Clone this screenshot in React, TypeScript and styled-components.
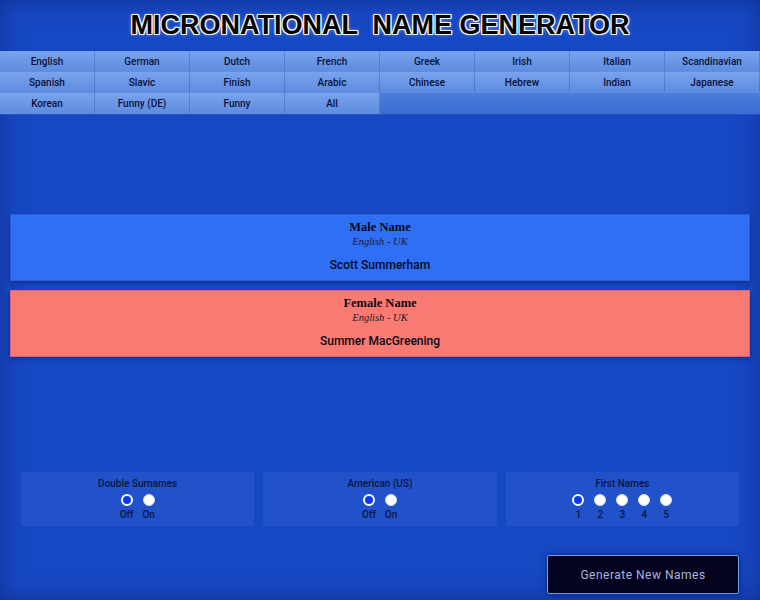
import { useState } from 'react';
import styled, { createGlobalStyle } from 'styled-components';

const GlobalStyle = createGlobalStyle`
  html, body {
    margin: 0;
    padding: 0;
    background: #1748c4;
  }
  #root {
    min-height: 600px;
  }
`;

const Page = styled.div`
  min-height: 600px;
  background: #1748c4;
  box-shadow: inset 0 0 24px rgba(10, 30, 110, 0.55);
  font-family: Roboto, 'Liberation Sans', sans-serif;
  display: flex;
  flex-direction: column;
`;

const Title = styled.h1`
  margin: 0;
  height: 51px;
  display: flex;
  align-items: center;
  justify-content: center;
  font-family: 'Liberation Sans', Arial, sans-serif;
  font-weight: 700;
  font-size: 27px;
  letter-spacing: 0;
  color: #050505;
  text-shadow:
    1px 0 0 #f4f4f4, -1px 0 0 #f4f4f4, 0 1px 0 #f4f4f4, 0 -1px 0 #f4f4f4,
    1px 1px 0 #f4f4f4, -1px -1px 0 #f4f4f4, 1px -1px 0 #f4f4f4, -1px 1px 0 #f4f4f4,
    0 0 4px rgba(255, 255, 255, 0.6);
  white-space: pre;
`;

const Nav = styled.nav`
  display: grid;
  grid-template-columns: repeat(8, 1fr);
  grid-auto-rows: 21px;
  background: linear-gradient(#6d98e6 0%, #4f80dc 60%, #3a6bd2 100%);
  border-bottom: 1px solid #2552c2;
`;

const NavButton = styled.button<{ active?: boolean }>`
  border: none;
  border-right: 1px solid rgba(40, 80, 170, 0.35);
  border-bottom: 1px solid rgba(40, 80, 170, 0.25);
  background: linear-gradient(#79a3ec, #5e8ce0);
  color: #081238;
  font-family: Roboto, 'Liberation Sans', sans-serif;
  font-weight: 500;
  font-size: 10px;
  padding: 0;
  cursor: pointer;

  &:hover {
    background: linear-gradient(#8ab0f0, #6c97e4);
  }
`;

const Cards = styled.section`
  display: flex;
  flex-direction: column;
  gap: 9px;
  padding: 99px 10px 0;
`;

const Card = styled.div<{ tone: 'male' | 'female' }>`
  height: 67px;
  box-sizing: border-box;
  background: ${p => (p.tone === 'male' ? '#2f6ff6' : '#f87a72')};
  border: 1px solid ${p => (p.tone === 'male' ? '#2a5fd8' : '#d8667a')};
  box-shadow: 0 2px 4px rgba(5, 20, 80, 0.45);
  display: flex;
  flex-direction: column;
  align-items: center;
  padding-top: 5px;
  color: #0a0a14;
`;

const CardTitle = styled.div`
  font-family: 'Liberation Serif', 'DejaVu Serif', serif;
  font-weight: 700;
  font-size: 12.5px;
  line-height: 15px;
`;

const CardSub = styled.div`
  font-family: 'Liberation Serif', serif;
  font-style: italic;
  font-size: 10.5px;
  line-height: 13px;
  color: #1a1a2a;
`;

const CardName = styled.div`
  margin-top: 10px;
  font-size: 12px;
  font-weight: 500;
  line-height: 14px;
`;

const Options = styled.section`
  display: grid;
  grid-template-columns: repeat(3, 1fr);
  gap: 9px;
  padding: 115px 21px 0;
`;

const OptionBox = styled.div`
  height: 54px;
  box-sizing: border-box;
  background: rgba(90, 130, 230, 0.18);
  display: flex;
  flex-direction: column;
  align-items: center;
  padding-top: 6px;
`;

const OptionTitle = styled.div`
  font-size: 10px;
  font-weight: 500;
  color: #0a1540;
  line-height: 12px;
`;

const RadioRow = styled.div`
  display: flex;
  gap: 10px;
  margin-top: 4px;
`;

const RadioItem = styled.label`
  display: flex;
  flex-direction: column;
  align-items: center;
  width: 12px;
  gap: 3px;
  cursor: pointer;
`;

const RadioDot = styled.span<{ checked?: boolean }>`
  width: 12px;
  height: 12px;
  box-sizing: border-box;
  border-radius: 50%;
  background: ${p => (p.checked ? '#0b3af0' : '#ffffff')};
  border: ${p => (p.checked ? '2px solid #ffffff' : '1px solid #d8dce8')};
`;

const RadioLabel = styled.span`
  font-size: 10px;
  font-weight: 500;
  color: #0a1540;
  line-height: 12px;
  white-space: nowrap;
`;

const Footer = styled.div`
  display: flex;
  justify-content: flex-end;
  padding: 29px 21px 6px;
`;

const GenerateButton = styled.button`
  width: 192px;
  height: 39px;
  background: #03031f;
  border: 1px solid #6f9cf0;
  border-radius: 2px;
  color: #a9b3dc;
  font-family: Roboto, 'Liberation Sans', sans-serif;
  font-size: 12px;
  letter-spacing: 0.5px;
  box-shadow: 0 0 6px rgba(0, 0, 40, 0.5);
  cursor: pointer;
`;

const languages = [
  'English', 'German', 'Dutch', 'French', 'Greek', 'Irish', 'Italian', 'Scandinavian',
  'Spanish', 'Slavic', 'Finish', 'Arabic', 'Chinese', 'Hebrew', 'Indian', 'Japanese',
  'Korean', 'Funny (DE)', 'Funny', 'All',
];

type RadioGroupProps = {
  title: string;
  options: string[];
  value: number;
  onChange: (i: number) => void;
};

const RadioGroup = ({ title, options, value, onChange }: RadioGroupProps) => (
  <OptionBox>
    <OptionTitle>{title}</OptionTitle>
    <RadioRow>
      {options.map((o, i) => (
        <RadioItem key={o} onClick={() => onChange(i)}>
          <RadioDot checked={value === i} />
          <RadioLabel>{o}</RadioLabel>
        </RadioItem>
      ))}
    </RadioRow>
  </OptionBox>
);

const App = () => {
  const [lang, setLang] = useState('English');
  const [double, setDouble] = useState(0);
  const [american, setAmerican] = useState(0);
  const [firstNames, setFirstNames] = useState(0);

  return (
    <Page>
      <GlobalStyle />
      <Title>{'MICRONATIONAL  NAME GENERATOR'}</Title>
      <Nav>
        {languages.map(l => (
          <NavButton key={l} active={lang === l} onClick={() => setLang(l)}>
            {l}
          </NavButton>
        ))}
      </Nav>

      <Cards>
        <Card tone="male">
          <CardTitle>Male Name</CardTitle>
          <CardSub>English - UK</CardSub>
          <CardName>Scott Summerham</CardName>
        </Card>
        <Card tone="female">
          <CardTitle>Female Name</CardTitle>
          <CardSub>English - UK</CardSub>
          <CardName>Summer MacGreening</CardName>
        </Card>
      </Cards>

      <Options>
        <RadioGroup title="Double Surnames" options={['Off', 'On']} value={double} onChange={setDouble} />
        <RadioGroup title="American (US)" options={['Off', 'On']} value={american} onChange={setAmerican} />
        <RadioGroup title="First Names" options={['1', '2', '3', '4', '5']} value={firstNames} onChange={setFirstNames} />
      </Options>

      <Footer>
        <GenerateButton>Generate New Names</GenerateButton>
      </Footer>
    </Page>
  );
};

export default App;
